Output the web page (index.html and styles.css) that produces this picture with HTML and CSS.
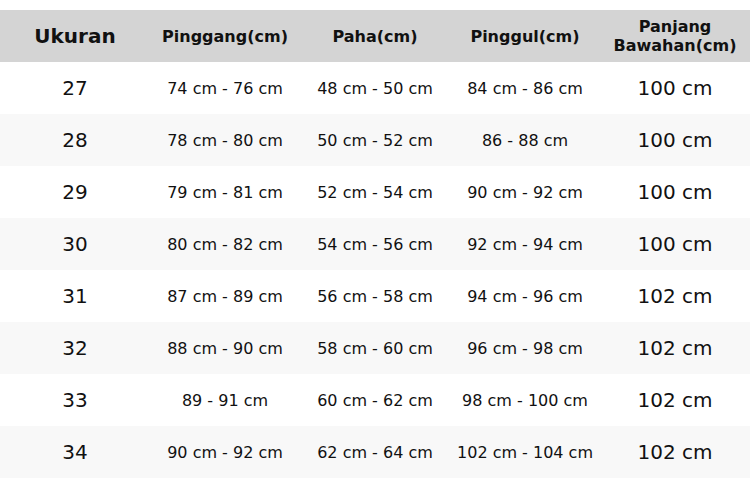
FILE: index.html
```html
<!DOCTYPE html>
<html>
<head>
<meta charset="utf-8">
<link rel="stylesheet" href="styles.css">
</head>
<body>
<table class="size-table">
  <thead>
    <tr>
      <th class="big">Ukuran</th>
      <th>Pinggang(cm)</th>
      <th>Paha(cm)</th>
      <th>Pinggul(cm)</th>
      <th>Panjang<br>Bawahan(cm)</th>
    </tr>
  </thead>
  <tbody>
    <tr><td class="big">27</td><td>74 cm - 76 cm</td><td>48 cm - 50 cm</td><td>84 cm - 86 cm</td><td class="big">100 cm</td></tr>
    <tr><td class="big">28</td><td>78 cm - 80 cm</td><td>50 cm - 52 cm</td><td>86 - 88 cm</td><td class="big">100 cm</td></tr>
    <tr><td class="big">29</td><td>79 cm - 81 cm</td><td>52 cm - 54 cm</td><td>90 cm - 92 cm</td><td class="big">100 cm</td></tr>
    <tr><td class="big">30</td><td>80 cm - 82 cm</td><td>54 cm - 56 cm</td><td>92 cm - 94 cm</td><td class="big">100 cm</td></tr>
    <tr><td class="big">31</td><td>87 cm - 89 cm</td><td>56 cm - 58 cm</td><td>94 cm - 96 cm</td><td class="big">102 cm</td></tr>
    <tr><td class="big">32</td><td>88 cm - 90 cm</td><td>58 cm - 60 cm</td><td>96 cm - 98 cm</td><td class="big">102 cm</td></tr>
    <tr><td class="big">33</td><td>89 - 91 cm</td><td>60 cm - 62 cm</td><td>98 cm - 100 cm</td><td class="big">102 cm</td></tr>
    <tr><td class="big">34</td><td>90 cm - 92 cm</td><td>62 cm - 64 cm</td><td>102 cm - 104 cm</td><td class="big">102 cm</td></tr>
  </tbody>
</table>
</body>
</html>
```
FILE: styles.css
```css
html, body {
  margin: 0;
  padding: 0;
  background: #ffffff;
}
body {
  padding-top: 10px;
  font-family: "DejaVu Sans", sans-serif;
  color: #111111;
}
.size-table {
  width: 750px;
  border-collapse: collapse;
  table-layout: fixed;
}
.size-table th,
.size-table td {
  width: 150px;
  height: 52px;
  padding: 0;
  text-align: center;
  vertical-align: middle;
  font-size: 16px;
}
.size-table th {
  background: #d4d4d4;
  font-weight: bold;
  line-height: 19px;
}
.size-table tbody tr:nth-child(even) {
  background: #f8f8f8;
}
.size-table .big {
  font-size: 20px;
}
```
